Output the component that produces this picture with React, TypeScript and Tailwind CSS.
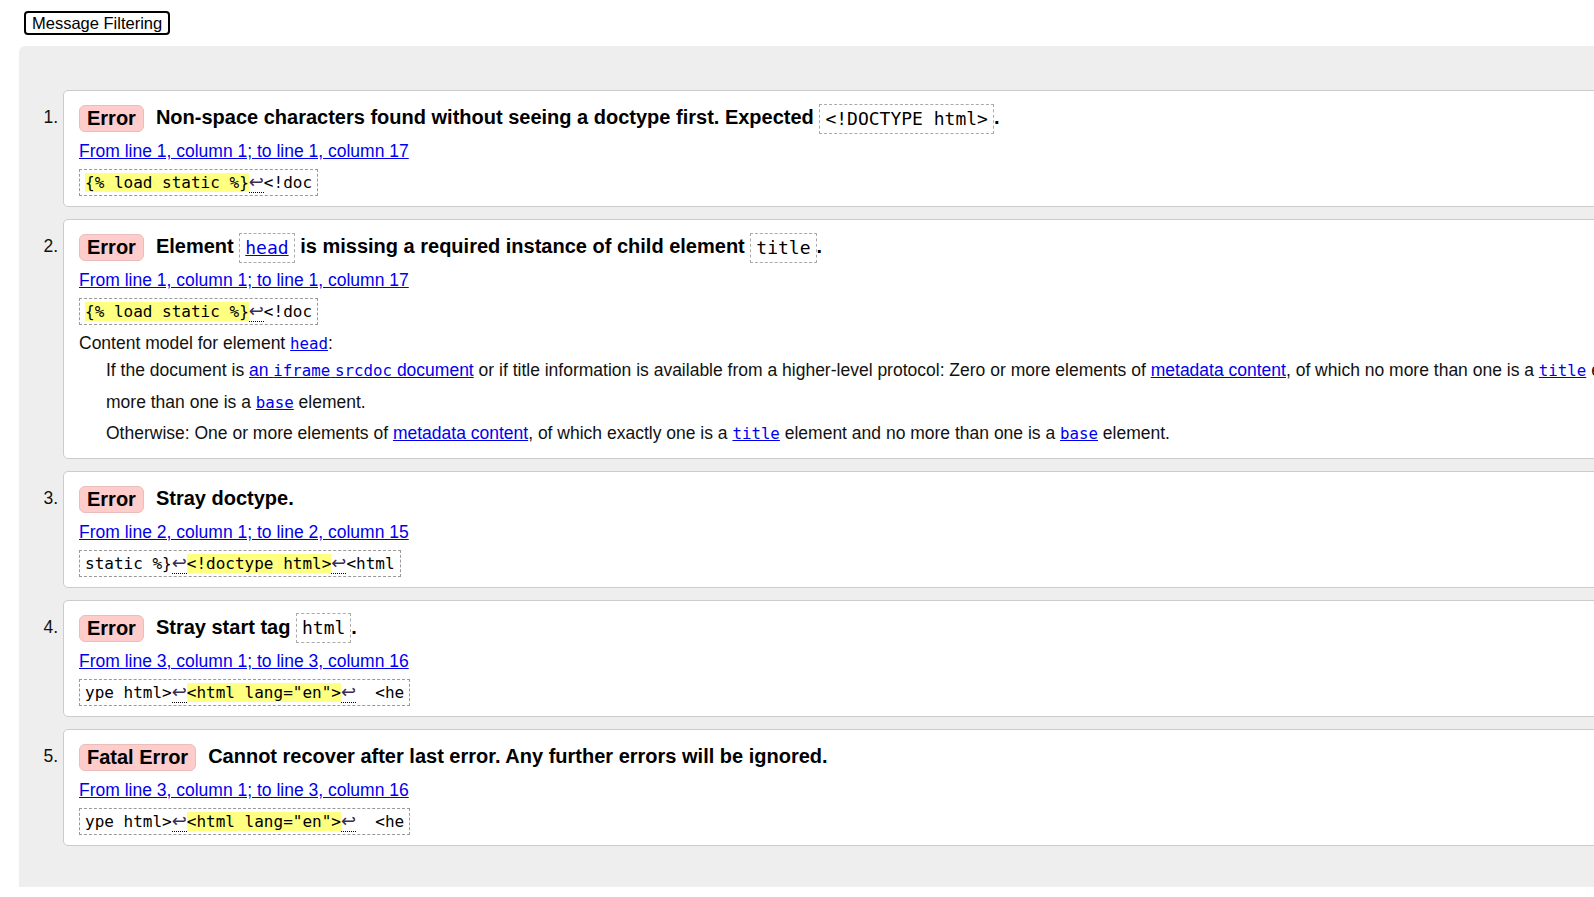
import React from 'react';

const mono = "font-['DejaVu_Sans_Mono',monospace]";

function Badge({ label }: { label: string }) {
  return (
    <span className="inline-block align-middle mr-[12px] rounded-[6px] border border-[#ebbcbc] bg-[#ffcccc] px-[7px] py-[1px] leading-[23px] text-[20px] font-bold text-black">
      {label}
    </span>
  );
}

function HCode({ children }: { children: React.ReactNode }) {
  return (
    <code className={`inline-block align-middle border border-dashed border-[#aaa] px-[5px] py-[2px] leading-[24px] text-[18px] font-normal ${mono}`}>
      {children}
    </code>
  );
}

function Lf() {
  return (
    <span className="border-b border-dotted border-black font-['DejaVu_Sans',sans-serif] text-[18px] leading-none text-[#3a2a55]">
      ↩
    </span>
  );
}

function Hl({ children }: { children: React.ReactNode }) {
  return <span className="bg-[#ffff80]">{children}</span>;
}

function Link({ children }: { children: React.ReactNode }) {
  return <a href="#" className="text-[#0000ee] underline">{children}</a>;
}

function C({ children }: { children: React.ReactNode }) {
  return <code className={`${mono} text-[15.75px]`}>{children}</code>;
}

interface Msg {
  type: string;
  heading: React.ReactNode;
  range: string;
  extract: React.ReactNode;
  extra?: React.ReactNode;
}

const messages: Msg[] = [
  {
    type: 'Error',
    heading: (
      <>
        Non-space characters found without seeing a doctype first. Expected <HCode>&lt;!DOCTYPE html&gt;</HCode>.
      </>
    ),
    range: 'From line 1, column 1; to line 1, column 17',
    extract: (
      <>
        <Hl>{'{% load static %}'}</Hl>
        <Lf />
        {'<!doc'}
      </>
    ),
  },
  {
    type: 'Error',
    heading: (
      <>
        Element <HCode><a href="#" className="text-[#0000ee] underline">head</a></HCode> is missing a required instance of child element <HCode>title</HCode>.
      </>
    ),
    range: 'From line 1, column 1; to line 1, column 17',
    extract: (
      <>
        <Hl>{'{% load static %}'}</Hl>
        <Lf />
        {'<!doc'}
      </>
    ),
    extra: (
      <>
        <p className="mt-[7px] leading-[22px]">
          Content model for element <Link><C>head</C></Link>:
        </p>
        <dl className="-mb-[2px]">
          <dd className="ml-[27px] leading-[31.5px]">
            If the document is <Link>an <C>iframe</C> <C>srcdoc</C> document</Link> or if title information is available from a higher-level protocol: Zero or more elements of <Link>metadata content</Link>, of which no more than one is a <Link><C>title</C></Link> element and no more than one is a <Link><C>base</C></Link> element.
          </dd>
          <dd className="ml-[27px] leading-[31.5px]">
            Otherwise: One or more elements of <Link>metadata content</Link>, of which exactly one is a <Link><C>title</C></Link> element and no more than one is a <Link><C>base</C></Link> element.
          </dd>
        </dl>
      </>
    ),
  },
  {
    type: 'Error',
    heading: <>Stray doctype.</>,
    range: 'From line 2, column 1; to line 2, column 15',
    extract: (
      <>
        {'static %}'}
        <Lf />
        <Hl>{'<!doctype html>'}</Hl>
        <Lf />
        {'<html'}
      </>
    ),
  },
  {
    type: 'Error',
    heading: (
      <>
        Stray start tag <HCode>html</HCode>.
      </>
    ),
    range: 'From line 3, column 1; to line 3, column 16',
    extract: (
      <>
        {'ype html>'}
        <Lf />
        <Hl>{'<html lang="en">'}</Hl>
        <Lf />
        {'  <he'}
      </>
    ),
  },
  {
    type: 'Fatal Error',
    heading: <>Cannot recover after last error. Any further errors will be ignored.</>,
    range: 'From line 3, column 1; to line 3, column 16',
    extract: (
      <>
        {'ype html>'}
        <Lf />
        <Hl>{'<html lang="en">'}</Hl>
        <Lf />
        {'  <he'}
      </>
    ),
  },
];

export default function App() {
  return (
    <div className="w-full min-h-[897px] overflow-hidden bg-white text-[17.5px] text-[#111] font-['Liberation_Sans',Arial,sans-serif]">
      <div className="pt-[10px] pl-[24px]">
        <button className="rounded-[4px] border-2 border-black bg-white px-[6px] py-0 leading-[20px] text-[16.5px] text-black">
          Message Filtering
        </button>
      </div>

      <div className="mt-[10px] ml-[19px] w-[1760px] rounded-tl-[6px] bg-[#eeeeee] pt-[44px] pb-[41px]">
        <ol className="flex flex-col gap-[12px]">
          {messages.map((m, i) => (
            <li key={i} className="flex">
              <div className="w-[44px] shrink-0 pt-[12px] pr-[5px] text-right leading-[30px] text-[17.5px]">
                {i + 1}.
              </div>
              <div className="w-[1688px] rounded-[5px] border border-[#cccccc] bg-white pl-[15px] pr-[15px] pt-[11px] pb-[10px]">
                <p className="h-[30px] leading-[30px] text-[20px] font-bold text-black">
                  <Badge label={m.type} />
                  {m.heading}
                </p>
                <p className="mt-[8px] leading-[22px]">
                  <Link>{m.range}</Link>
                </p>
                <div className="mt-[7px] flex">
                  <code className={`block whitespace-pre border border-dashed border-[#999] px-[5px] py-[2px] leading-[21px] text-[16px] text-black ${mono}`}>
                    {m.extract}
                  </code>
                </div>
                {m.extra}
              </div>
            </li>
          ))}
        </ol>
      </div>
    </div>
  );
}
